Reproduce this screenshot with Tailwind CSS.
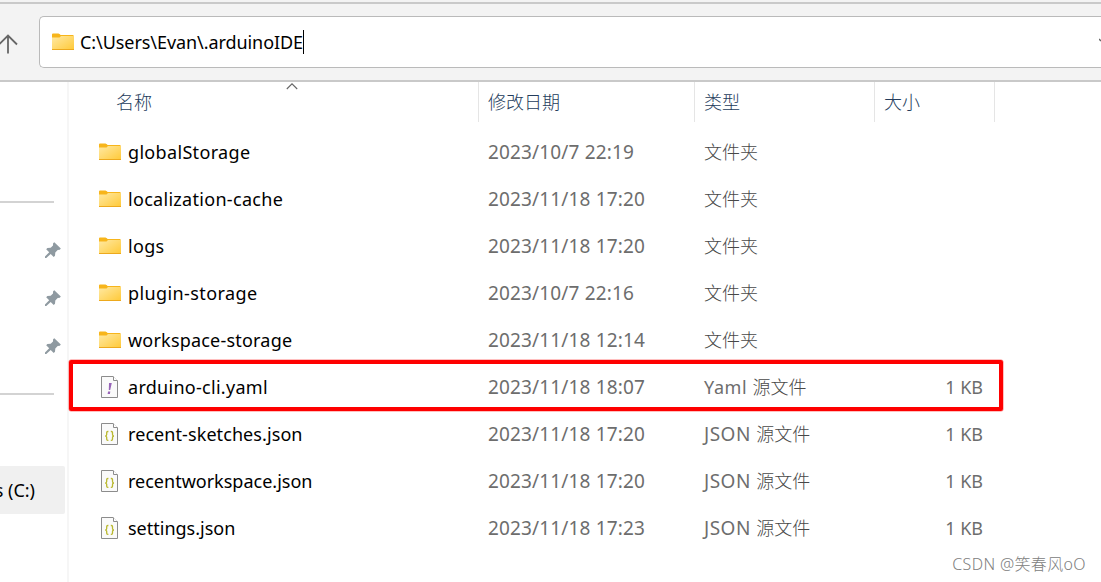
<!DOCTYPE html>
<html lang="zh-CN">
<head>
<meta charset="utf-8">
<title>.arduinoIDE</title>
<script src="https://cdn.jsdelivr.net/npm/@tailwindcss/browser@4"></script>
</head>
<body class="relative flex h-[582px] w-[1101px] flex-col overflow-hidden bg-white font-['Noto_Sans','Noto_Sans_CJK_SC',sans-serif] text-[18px] leading-[26px] text-black">
<svg class="absolute size-0">
  <defs>
    <linearGradient id="fg" x1="0" y1="0" x2="1" y2="1"><stop offset="0" stop-color="#ffe9a3"/><stop offset="1" stop-color="#ffc937"/></linearGradient>
    <symbol id="folder" viewBox="0 0 22 18">
      <path d="M0 1.5Q0 .5 1 .5H6.5L8.3 1.6V2H21.5V5H0Z" fill="#f7b51b"/>
      <path d="M0 4.5H7.5L9 3H22V17H0Z" fill="url(#fg)"/>
      <path d="M0 16.5H22" stroke="#eda91d"/>
    </symbol>
    <symbol id="file" viewBox="0 0 17 22">
      <path d="M.5 .5H12L16.5 5V21.5H.5Z" fill="#fafafa" stroke="#8c8c8c"/>
      <path d="M12.5 .5V4.5H16.5" fill="#fff" stroke="#8c8c8c"/>
    </symbol>
    <symbol id="json" viewBox="0 0 17 22">
      <use href="#file" width="17" height="22"/>
      <path d="M7.4 8.5H6.8Q5.7 8.5 5.7 9.6V11.5Q5.7 13 4.2 13Q5.7 13 5.7 14.5V16.2Q5.7 17.3 6.8 17.3H7.4M9.8 8.5H10.4Q11.5 8.5 11.5 9.6V11.5Q11.5 13 13 13Q11.5 13 11.5 14.5V16.2Q11.5 17.3 10.4 17.3H9.8" fill="none" stroke="#b9b82f" stroke-width="1.3"/>
    </symbol>
    <symbol id="yaml" viewBox="0 0 17 22">
      <use href="#file" width="17" height="22"/>
      <path d="M8 7H10.8L9.2 14H7.8ZM7.1 15.6H9.3L8.9 18H6.6Z" fill="#9864b8"/>
    </symbol>
    <symbol id="pin" viewBox="0 0 16 16">
      <path d="M9.3 .2L15.8 6.4L14.8 7.8L12.7 8L10.3 10.6L10 13.8L8.7 15L5.7 12L1.3 16L0 15.9V14.5L4.2 10.2L1.2 7.2L2.4 5.9L5.7 5.8L8 3.4L8.1 1.3Z" fill="#8f9aa1"/>
    </symbol>
  </defs>
</svg>
<header class="flex h-[82px] shrink-0 flex-col bg-[#f3f3f3]">
  <div class="h-1 shrink-0 border-b-2 border-[#c9c9c9]"></div>
  <div class="flex h-[78px] items-start border-b-2 border-[#c9c9c9] pt-3">
    <svg class="mt-[18px] mr-[21px] h-5 w-[18px] shrink-0" viewBox="0 0 18 20" fill="none" stroke="#666" stroke-width="1.8"><path d="M8 19.5V1.5M-1 10.5L8 1.5L17 10.5"/></svg>
    <div class="flex h-[52px] flex-1 items-center rounded-l-[5px] border border-r-0 border-[#bababa] bg-white pl-3">
      <svg class="h-[18px] w-[22px] shrink-0"><use href="#folder"/></svg>
      <span class="ml-1.5 w-[223px] tracking-[-.07px] whitespace-nowrap">C:\Users\Evan\.arduinoIDE</span>
      <span class="h-6 w-px bg-black"></span>
      <svg class="ml-auto h-2 w-[2px]" viewBox="0 0 2 8"><path d="M0 1L2 3" stroke="#666" stroke-width="1.5"/></svg>
    </div>
  </div>
</header>
<div class="flex flex-1">
  <aside class="flex w-[69px] shrink-0 flex-col border-r-2 border-[#f6f6f6] pt-[119px]">
    <div class="h-0.5 w-[54px] shrink-0 bg-[#d3d3d3]"></div>
    <div class="flex h-[190px] shrink-0 flex-col items-end gap-8 pt-[39px] pr-[6px]">
      <svg class="size-4"><use href="#pin"/></svg>
      <svg class="size-4"><use href="#pin"/></svg>
      <svg class="size-4"><use href="#pin"/></svg>
    </div>
    <div class="h-0.5 w-[54px] shrink-0 bg-[#d3d3d3]"></div>
    <div class="mt-[71px] flex h-12 w-[65px] shrink-0 items-center justify-end overflow-hidden rounded-r-[2px] bg-[#f0f0f0] pr-[30px] whitespace-nowrap">s (C:)</div>
  </aside>
  <main class="flex flex-1 flex-col">
    <div class="relative flex h-10 shrink-0 font-light text-[#243c5c]">
      <div class="flex w-[410px] items-center border-r border-[#e5e5e5] pl-[47px]">名称</div>
      <div class="flex w-[216px] items-center border-r border-[#e5e5e5] pl-[9px]">修改日期</div>
      <div class="flex w-[180px] items-center border-r border-[#e5e5e5] pl-[9px]">类型</div>
      <div class="flex w-[120px] items-center border-r border-[#e5e5e5] pl-[9px]">大小</div>
      <svg class="absolute top-px left-[217px] h-2 w-3" viewBox="0 0 12 8" fill="none" stroke="#666" stroke-width="1.1"><path d="M.8 6L6 .8L11.2 6"/></svg>
    </div>
    <div class="grid auto-rows-[47px] grid-cols-[29px_360px_216px_180px_99px] items-center pt-[6px] pl-[30px] whitespace-nowrap text-[#6d6d6d]">
      <svg class="h-[18px] w-[22px]"><use href="#folder"/></svg><span class="tracking-[.33px] text-black">globalStorage</span><span class="text-[19px] tracking-[.15px]">2023/10/7 22:19</span><span class="font-light text-[#484848]">文件夹</span><span></span>
      <svg class="h-[18px] w-[22px]"><use href="#folder"/></svg><span class="tracking-[.3px] text-black">localization-cache</span><span class="text-[19px] tracking-[.15px]">2023/11/18 17:20</span><span class="font-light text-[#484848]">文件夹</span><span></span>
      <svg class="h-[18px] w-[22px]"><use href="#folder"/></svg><span class="tracking-[.3px] text-black">logs</span><span class="text-[19px] tracking-[.15px]">2023/11/18 17:20</span><span class="font-light text-[#484848]">文件夹</span><span></span>
      <svg class="h-[18px] w-[22px]"><use href="#folder"/></svg><span class="tracking-[.4px] text-black">plugin-storage</span><span class="text-[19px] tracking-[.15px]">2023/10/7 22:16</span><span class="font-light text-[#484848]">文件夹</span><span></span>
      <svg class="h-[18px] w-[22px]"><use href="#folder"/></svg><span class="tracking-[.2px] text-black">workspace-storage</span><span class="text-[19px] tracking-[.15px]">2023/11/18 12:14</span><span class="font-light text-[#484848]">文件夹</span><span></span>
      <svg class="ml-0.5 h-[22px] w-[17px]"><use href="#yaml"/></svg><span class="tracking-[.28px] text-black">arduino-cli.yaml</span><span class="text-[19px] tracking-[.15px]">2023/11/18 18:07</span><span><span class="tracking-[.6px]">Yaml </span><span class="font-light text-[#484848]">源文件</span></span><span class="text-right">1 KB</span>
      <svg class="ml-0.5 h-[22px] w-[17px]"><use href="#json"/></svg><span class="tracking-[.08px] text-black">recent-sketches.json</span><span class="text-[19px] tracking-[.15px]">2023/11/18 17:20</span><span><span class="text-[19px] tracking-[.5px]">JSON </span><span class="font-light text-[#484848]">源文件</span></span><span class="text-right">1 KB</span>
      <svg class="ml-0.5 h-[22px] w-[17px]"><use href="#json"/></svg><span class="text-black">recentworkspace.json</span><span class="text-[19px] tracking-[.15px]">2023/11/18 17:20</span><span><span class="text-[19px] tracking-[.5px]">JSON </span><span class="font-light text-[#484848]">源文件</span></span><span class="text-right">1 KB</span>
      <svg class="ml-0.5 h-[22px] w-[17px]"><use href="#json"/></svg><span class="text-black">settings.json</span><span class="text-[19px] tracking-[.15px]">2023/11/18 17:23</span><span><span class="text-[19px] tracking-[.5px]">JSON </span><span class="font-light text-[#484848]">源文件</span></span><span class="text-right">1 KB</span>
    </div>
  </main>
</div>
<div class="absolute top-[360px] left-[69px] h-[51px] w-[934px] rounded-[2px] border-4 border-[#fe0000] ring-[.5px] ring-[#fe0000]/50"></div>
<div class="absolute right-[15px] bottom-[6px] text-[16px] leading-6 font-light tracking-[.35px] whitespace-nowrap text-[#808080]">CSDN @笑春风oO</div>
</body>
</html>
